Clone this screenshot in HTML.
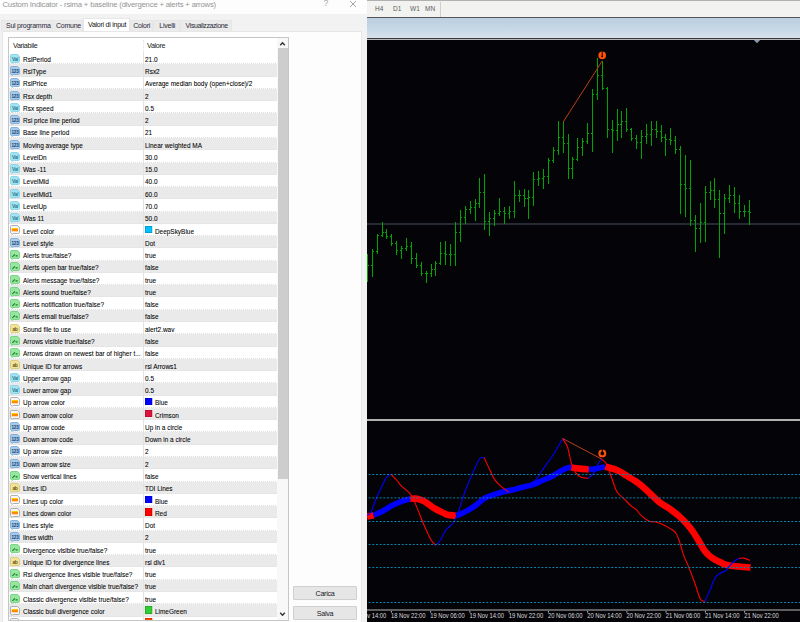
<!DOCTYPE html>
<html><head><meta charset="utf-8">
<style>
*{margin:0;padding:0;box-sizing:border-box}
html,body{width:800px;height:622px;overflow:hidden;background:#f0f0f0;font-family:"Liberation Sans",sans-serif;}
.abs{position:absolute}
#dlg{position:absolute;left:0;top:0;width:367px;height:622px;background:#f2f2f2;overflow:hidden}
#title{position:absolute;left:0;top:0;width:367px;height:14px;background:#fdfdfd}
#ttext{position:absolute;left:2.5px;top:-0.4px;font-size:7.7px;color:#959595;white-space:nowrap;letter-spacing:-0.18px}
#q{position:absolute;left:323.5px;top:-1.6px;font-size:8.6px;color:#a4a4a4}
#x{position:absolute;left:349px;top:0.2px}
.tab{position:absolute;top:19.5px;height:11.5px;background:#ebebeb;border:1px solid #e6e6e6;border-bottom:none;font-size:7px;color:#2a2a3a;white-space:nowrap;padding-top:1px;letter-spacing:-0.25px}
.tab.sel{top:17.5px;height:13.5px;background:#ffffff;z-index:2;color:#111}
#panel{position:absolute;left:2px;top:31px;width:360px;height:600px;background:#fdfdfd;border:1px solid #e6e6e6}
#tbl{position:absolute;left:8px;top:37px;width:281px;height:584px;background:#fff;overflow:hidden}
#tblb{position:absolute;left:8px;top:37px;width:281px;height:584px;border:1px solid #c6c6c6;z-index:5}
.hd{position:absolute;top:3.6px;font-size:7.2px;color:#222;letter-spacing:-0.35px}
.r{position:absolute;left:1px;width:269px;height:12.27px;background:#fff;border-bottom:1px dotted #e0e0e0;font-size:8px;color:#000;white-space:nowrap;-webkit-text-stroke:0.08px #000}
.r.g{background:#eaeaea}
.r .n{position:absolute;left:14px;top:2.7px;transform:scaleX(0.806);transform-origin:0 0}
.r .v{position:absolute;left:136px;top:2.7px;transform:scaleX(0.806);transform-origin:0 0}
.r .sw{position:absolute;left:0px;top:-0.8px;width:8.8px;height:7.6px;box-shadow:inset 0 0 0 0.8px rgba(0,0,0,0.22)}
.r .vt2{position:absolute;left:12.3px;top:0;white-space:nowrap}
.ic{position:absolute;left:0.8px;top:1.6px}
.icd{background:#a0e2f2;color:#2a7a90;border:1px solid #78cce2}
.ici{background:#a4c9ea;color:#173c6c;border:1px solid #6ea2d2}
.ics{background:#eedf8a;color:#6a5a10;border:1px solid #cdb84c}
.icb{background:#7ee08a;border:1px solid #3fb04c}
.icb svg{position:absolute;left:-1px;top:-1px}
.icc{background:#f4f4f4;border:1px solid #9a9a9a}
.icc b{position:absolute;left:1px;top:2.5px;width:6px;height:3px;background:#ff8c00;border-top:1px solid #ffd000}
#colsep{position:absolute;left:143px;top:52px;width:1px;height:568px;background:#e2e2e2;z-index:3}
#colsep2{position:absolute;left:143px;top:40px;width:0;height:12px;border-left:1px dotted #e4e4e4;z-index:3}
#sb{position:absolute;left:277px;top:38px;width:11px;height:582px;background:#f8f8f8;z-index:4}
#thumb{position:absolute;left:278px;top:48px;width:9.6px;height:430.5px;background:#cdcdcd;z-index:4}
.btn{position:absolute;left:293px;width:64px;height:13.5px;background:#e6e6e6;border:1px solid #cfcfcf;border-radius:1px;font-size:7.2px;color:#1a1a2a;text-align:center;line-height:13.4px;letter-spacing:-0.3px}
#rstrip{position:absolute;left:362px;top:31px;width:5px;height:591px;background:#f2f2f2}
#chart{position:absolute;left:367px;top:0;width:433px;height:622px;background:#040307;overflow:hidden}
#tb{position:absolute;left:0;top:0;width:433px;height:17px;background:#f2f2f0;border-top:1px solid #b0b0b0}
#tb span{position:absolute;top:4.3px;font-size:6.5px;color:#5a5a5a}
#tbsep{position:absolute;left:73px;top:1px;width:1px;height:15px;background:#cfcfcf}
#dk1{position:absolute;left:0;top:16.6px;width:433px;height:1.2px;background:#555}
#blue{position:absolute;left:0;top:17.6px;width:433px;height:20px;background:linear-gradient(#bccfe0,#c6d6e4 50%,#d6e2ec)}
#dk2{position:absolute;left:0;top:37.7px;width:433px;height:1.2px;background:#3a3a3a}
#lt2{position:absolute;left:0;top:38.9px;width:433px;height:1.1px;background:#b8b8b8}
svg#cs{position:absolute;left:0;top:0}
</style></head><body>
<div id="dlg">
  <div id="title"><span id="ttext">Custom Indicator - rsima + baseline (divergence + alerts + arrows)</span>
   <span id="q">?</span>
   <svg id="x" width="8" height="8" viewBox="0 0 8 8"><path d="M1 1L7 7M7 1L1 7" stroke="#9a9a9a" stroke-width="0.9"/></svg>
  </div>
  <div id="panel"></div>
  <div class="tab" style="left:1px;width:52px;padding-left:4px">Sul programma</div>
  <div class="tab" style="left:52px;width:31px;padding-left:3px">Comune</div>
  <div class="tab sel" style="left:83px;width:47px;padding-left:4px;padding-top:2px">Valori di input</div>
  <div class="tab" style="left:130px;width:23px;padding-left:2.3px">Colori</div>
  <div class="tab" style="left:153px;width:27px;padding-left:5.3px">Livelli</div>
  <div class="tab" style="left:180px;width:52px;padding-left:4.6px;letter-spacing:-0.4px">Visualizzazione</div>
  <div id="tbl">
    <span class="hd" style="left:5px">Variabile</span>
    <span class="hd" style="left:139px">Valore</span>
    <div class="r" style="top:15.10px"><svg class="ic" width="10" height="10" viewBox="0 0 10 10"><path d="M0.5 1.6Q0.5 0.5 1.6 0.5H7.6L9.5 2.4V7.4Q9.5 8.5 8.4 8.5H3.2L2.2 9.5L1.8 8.5H1.6Q0.5 8.5 0.5 7.4Z" fill="#a2e3f3" stroke="#7fcfe4" stroke-width="0.8"/><text x="5" y="6.6" font-size="5" font-weight="bold" text-anchor="middle" fill="#2c7d92" font-family="Liberation Sans" letter-spacing="-0.4">Va/</text></svg><span class="n">RsiPeriod</span><span class="v">21.0</span></div>
<div class="r g" style="top:27.37px"><svg class="ic" width="10" height="10" viewBox="0 0 10 10"><path d="M0.5 1.6Q0.5 0.5 1.6 0.5H7.6L9.5 2.4V7.4Q9.5 8.5 8.4 8.5H3.2L2.2 9.5L1.8 8.5H1.6Q0.5 8.5 0.5 7.4Z" fill="#a6cbec" stroke="#72a6d6" stroke-width="0.8"/><text x="5" y="6.7" font-size="4.6" font-weight="bold" text-anchor="middle" fill="#17406e" font-family="Liberation Sans" letter-spacing="-0.2">123</text></svg><span class="n">RsiType</span><span class="v">Rsx2</span></div>
<div class="r" style="top:39.64px"><svg class="ic" width="10" height="10" viewBox="0 0 10 10"><path d="M0.5 1.6Q0.5 0.5 1.6 0.5H7.6L9.5 2.4V7.4Q9.5 8.5 8.4 8.5H3.2L2.2 9.5L1.8 8.5H1.6Q0.5 8.5 0.5 7.4Z" fill="#a6cbec" stroke="#72a6d6" stroke-width="0.8"/><text x="5" y="6.7" font-size="4.6" font-weight="bold" text-anchor="middle" fill="#17406e" font-family="Liberation Sans" letter-spacing="-0.2">123</text></svg><span class="n">RsiPrice</span><span class="v">Average median body (open+close)/2</span></div>
<div class="r g" style="top:51.91px"><svg class="ic" width="10" height="10" viewBox="0 0 10 10"><path d="M0.5 1.6Q0.5 0.5 1.6 0.5H7.6L9.5 2.4V7.4Q9.5 8.5 8.4 8.5H3.2L2.2 9.5L1.8 8.5H1.6Q0.5 8.5 0.5 7.4Z" fill="#a6cbec" stroke="#72a6d6" stroke-width="0.8"/><text x="5" y="6.7" font-size="4.6" font-weight="bold" text-anchor="middle" fill="#17406e" font-family="Liberation Sans" letter-spacing="-0.2">123</text></svg><span class="n">Rsx depth</span><span class="v">2</span></div>
<div class="r" style="top:64.18px"><svg class="ic" width="10" height="10" viewBox="0 0 10 10"><path d="M0.5 1.6Q0.5 0.5 1.6 0.5H7.6L9.5 2.4V7.4Q9.5 8.5 8.4 8.5H3.2L2.2 9.5L1.8 8.5H1.6Q0.5 8.5 0.5 7.4Z" fill="#a2e3f3" stroke="#7fcfe4" stroke-width="0.8"/><text x="5" y="6.6" font-size="5" font-weight="bold" text-anchor="middle" fill="#2c7d92" font-family="Liberation Sans" letter-spacing="-0.4">Va/</text></svg><span class="n">Rsx speed</span><span class="v">0.5</span></div>
<div class="r g" style="top:76.45px"><svg class="ic" width="10" height="10" viewBox="0 0 10 10"><path d="M0.5 1.6Q0.5 0.5 1.6 0.5H7.6L9.5 2.4V7.4Q9.5 8.5 8.4 8.5H3.2L2.2 9.5L1.8 8.5H1.6Q0.5 8.5 0.5 7.4Z" fill="#a6cbec" stroke="#72a6d6" stroke-width="0.8"/><text x="5" y="6.7" font-size="4.6" font-weight="bold" text-anchor="middle" fill="#17406e" font-family="Liberation Sans" letter-spacing="-0.2">123</text></svg><span class="n">Rsi price line period</span><span class="v">2</span></div>
<div class="r" style="top:88.72px"><svg class="ic" width="10" height="10" viewBox="0 0 10 10"><path d="M0.5 1.6Q0.5 0.5 1.6 0.5H7.6L9.5 2.4V7.4Q9.5 8.5 8.4 8.5H3.2L2.2 9.5L1.8 8.5H1.6Q0.5 8.5 0.5 7.4Z" fill="#a6cbec" stroke="#72a6d6" stroke-width="0.8"/><text x="5" y="6.7" font-size="4.6" font-weight="bold" text-anchor="middle" fill="#17406e" font-family="Liberation Sans" letter-spacing="-0.2">123</text></svg><span class="n">Base line period</span><span class="v">21</span></div>
<div class="r g" style="top:100.99px"><svg class="ic" width="10" height="10" viewBox="0 0 10 10"><path d="M0.5 1.6Q0.5 0.5 1.6 0.5H7.6L9.5 2.4V7.4Q9.5 8.5 8.4 8.5H3.2L2.2 9.5L1.8 8.5H1.6Q0.5 8.5 0.5 7.4Z" fill="#a6cbec" stroke="#72a6d6" stroke-width="0.8"/><text x="5" y="6.7" font-size="4.6" font-weight="bold" text-anchor="middle" fill="#17406e" font-family="Liberation Sans" letter-spacing="-0.2">123</text></svg><span class="n">Moving average type</span><span class="v">Linear weighted MA</span></div>
<div class="r" style="top:113.26px"><svg class="ic" width="10" height="10" viewBox="0 0 10 10"><path d="M0.5 1.6Q0.5 0.5 1.6 0.5H7.6L9.5 2.4V7.4Q9.5 8.5 8.4 8.5H3.2L2.2 9.5L1.8 8.5H1.6Q0.5 8.5 0.5 7.4Z" fill="#a2e3f3" stroke="#7fcfe4" stroke-width="0.8"/><text x="5" y="6.6" font-size="5" font-weight="bold" text-anchor="middle" fill="#2c7d92" font-family="Liberation Sans" letter-spacing="-0.4">Va/</text></svg><span class="n">LevelDn</span><span class="v">30.0</span></div>
<div class="r g" style="top:125.53px"><svg class="ic" width="10" height="10" viewBox="0 0 10 10"><path d="M0.5 1.6Q0.5 0.5 1.6 0.5H7.6L9.5 2.4V7.4Q9.5 8.5 8.4 8.5H3.2L2.2 9.5L1.8 8.5H1.6Q0.5 8.5 0.5 7.4Z" fill="#a2e3f3" stroke="#7fcfe4" stroke-width="0.8"/><text x="5" y="6.6" font-size="5" font-weight="bold" text-anchor="middle" fill="#2c7d92" font-family="Liberation Sans" letter-spacing="-0.4">Va/</text></svg><span class="n">Was -11</span><span class="v">15.0</span></div>
<div class="r" style="top:137.80px"><svg class="ic" width="10" height="10" viewBox="0 0 10 10"><path d="M0.5 1.6Q0.5 0.5 1.6 0.5H7.6L9.5 2.4V7.4Q9.5 8.5 8.4 8.5H3.2L2.2 9.5L1.8 8.5H1.6Q0.5 8.5 0.5 7.4Z" fill="#a2e3f3" stroke="#7fcfe4" stroke-width="0.8"/><text x="5" y="6.6" font-size="5" font-weight="bold" text-anchor="middle" fill="#2c7d92" font-family="Liberation Sans" letter-spacing="-0.4">Va/</text></svg><span class="n">LevelMid</span><span class="v">40.0</span></div>
<div class="r g" style="top:150.07px"><svg class="ic" width="10" height="10" viewBox="0 0 10 10"><path d="M0.5 1.6Q0.5 0.5 1.6 0.5H7.6L9.5 2.4V7.4Q9.5 8.5 8.4 8.5H3.2L2.2 9.5L1.8 8.5H1.6Q0.5 8.5 0.5 7.4Z" fill="#a2e3f3" stroke="#7fcfe4" stroke-width="0.8"/><text x="5" y="6.6" font-size="5" font-weight="bold" text-anchor="middle" fill="#2c7d92" font-family="Liberation Sans" letter-spacing="-0.4">Va/</text></svg><span class="n">LevelMid1</span><span class="v">60.0</span></div>
<div class="r" style="top:162.34px"><svg class="ic" width="10" height="10" viewBox="0 0 10 10"><path d="M0.5 1.6Q0.5 0.5 1.6 0.5H7.6L9.5 2.4V7.4Q9.5 8.5 8.4 8.5H3.2L2.2 9.5L1.8 8.5H1.6Q0.5 8.5 0.5 7.4Z" fill="#a2e3f3" stroke="#7fcfe4" stroke-width="0.8"/><text x="5" y="6.6" font-size="5" font-weight="bold" text-anchor="middle" fill="#2c7d92" font-family="Liberation Sans" letter-spacing="-0.4">Va/</text></svg><span class="n">LevelUp</span><span class="v">70.0</span></div>
<div class="r g" style="top:174.61px"><svg class="ic" width="10" height="10" viewBox="0 0 10 10"><path d="M0.5 1.6Q0.5 0.5 1.6 0.5H7.6L9.5 2.4V7.4Q9.5 8.5 8.4 8.5H3.2L2.2 9.5L1.8 8.5H1.6Q0.5 8.5 0.5 7.4Z" fill="#a2e3f3" stroke="#7fcfe4" stroke-width="0.8"/><text x="5" y="6.6" font-size="5" font-weight="bold" text-anchor="middle" fill="#2c7d92" font-family="Liberation Sans" letter-spacing="-0.4">Va/</text></svg><span class="n">Was 11</span><span class="v">50.0</span></div>
<div class="r" style="top:186.88px"><svg class="ic" width="10" height="10" viewBox="0 0 10 10"><path d="M0.5 1.6Q0.5 0.5 1.6 0.5H7.6L9.5 2.4V7.4Q9.5 8.5 8.4 8.5H3.2L2.2 9.5L1.8 8.5H1.6Q0.5 8.5 0.5 7.4Z" fill="#f6f6f6" stroke="#9c9c9c" stroke-width="0.8"/><rect x="1.8" y="3.3" width="6.2" height="3" fill="#ff8a00"/><rect x="1.8" y="3.1" width="6.2" height="0.9" fill="#ffd200"/></svg><span class="n">Level color</span><span class="v"><b class="sw" style="background:#00bfff"></b><span class="vt2">DeepSkyBlue</span></span></div>
<div class="r g" style="top:199.15px"><svg class="ic" width="10" height="10" viewBox="0 0 10 10"><path d="M0.5 1.6Q0.5 0.5 1.6 0.5H7.6L9.5 2.4V7.4Q9.5 8.5 8.4 8.5H3.2L2.2 9.5L1.8 8.5H1.6Q0.5 8.5 0.5 7.4Z" fill="#a6cbec" stroke="#72a6d6" stroke-width="0.8"/><text x="5" y="6.7" font-size="4.6" font-weight="bold" text-anchor="middle" fill="#17406e" font-family="Liberation Sans" letter-spacing="-0.2">123</text></svg><span class="n">Level style</span><span class="v">Dot</span></div>
<div class="r" style="top:211.42px"><svg class="ic" width="10" height="10" viewBox="0 0 10 10"><path d="M0.5 1.6Q0.5 0.5 1.6 0.5H7.6L9.5 2.4V7.4Q9.5 8.5 8.4 8.5H3.2L2.2 9.5L1.8 8.5H1.6Q0.5 8.5 0.5 7.4Z" fill="#96e6a0" stroke="#68cc76" stroke-width="0.8"/><path d="M2.4 6.8L5 4.4M5.6 5.9H7.6" stroke="#157a25" stroke-width="1.1" fill="none"/></svg><span class="n">Alerts true/false?</span><span class="v">true</span></div>
<div class="r g" style="top:223.69px"><svg class="ic" width="10" height="10" viewBox="0 0 10 10"><path d="M0.5 1.6Q0.5 0.5 1.6 0.5H7.6L9.5 2.4V7.4Q9.5 8.5 8.4 8.5H3.2L2.2 9.5L1.8 8.5H1.6Q0.5 8.5 0.5 7.4Z" fill="#96e6a0" stroke="#68cc76" stroke-width="0.8"/><path d="M2.4 6.8L5 4.4M5.6 5.9H7.6" stroke="#157a25" stroke-width="1.1" fill="none"/></svg><span class="n">Alerts open bar true/false?</span><span class="v">false</span></div>
<div class="r" style="top:235.96px"><svg class="ic" width="10" height="10" viewBox="0 0 10 10"><path d="M0.5 1.6Q0.5 0.5 1.6 0.5H7.6L9.5 2.4V7.4Q9.5 8.5 8.4 8.5H3.2L2.2 9.5L1.8 8.5H1.6Q0.5 8.5 0.5 7.4Z" fill="#96e6a0" stroke="#68cc76" stroke-width="0.8"/><path d="M2.4 6.8L5 4.4M5.6 5.9H7.6" stroke="#157a25" stroke-width="1.1" fill="none"/></svg><span class="n">Alerts message true/false?</span><span class="v">true</span></div>
<div class="r g" style="top:248.23px"><svg class="ic" width="10" height="10" viewBox="0 0 10 10"><path d="M0.5 1.6Q0.5 0.5 1.6 0.5H7.6L9.5 2.4V7.4Q9.5 8.5 8.4 8.5H3.2L2.2 9.5L1.8 8.5H1.6Q0.5 8.5 0.5 7.4Z" fill="#96e6a0" stroke="#68cc76" stroke-width="0.8"/><path d="M2.4 6.8L5 4.4M5.6 5.9H7.6" stroke="#157a25" stroke-width="1.1" fill="none"/></svg><span class="n">Alerts sound true/false?</span><span class="v">true</span></div>
<div class="r" style="top:260.50px"><svg class="ic" width="10" height="10" viewBox="0 0 10 10"><path d="M0.5 1.6Q0.5 0.5 1.6 0.5H7.6L9.5 2.4V7.4Q9.5 8.5 8.4 8.5H3.2L2.2 9.5L1.8 8.5H1.6Q0.5 8.5 0.5 7.4Z" fill="#96e6a0" stroke="#68cc76" stroke-width="0.8"/><path d="M2.4 6.8L5 4.4M5.6 5.9H7.6" stroke="#157a25" stroke-width="1.1" fill="none"/></svg><span class="n">Alerts notification true/false?</span><span class="v">false</span></div>
<div class="r g" style="top:272.77px"><svg class="ic" width="10" height="10" viewBox="0 0 10 10"><path d="M0.5 1.6Q0.5 0.5 1.6 0.5H7.6L9.5 2.4V7.4Q9.5 8.5 8.4 8.5H3.2L2.2 9.5L1.8 8.5H1.6Q0.5 8.5 0.5 7.4Z" fill="#96e6a0" stroke="#68cc76" stroke-width="0.8"/><path d="M2.4 6.8L5 4.4M5.6 5.9H7.6" stroke="#157a25" stroke-width="1.1" fill="none"/></svg><span class="n">Alerts email true/false?</span><span class="v">false</span></div>
<div class="r" style="top:285.04px"><svg class="ic" width="10" height="10" viewBox="0 0 10 10"><path d="M0.5 1.6Q0.5 0.5 1.6 0.5H7.6L9.5 2.4V7.4Q9.5 8.5 8.4 8.5H3.2L2.2 9.5L1.8 8.5H1.6Q0.5 8.5 0.5 7.4Z" fill="#f1e39a" stroke="#d8c46a" stroke-width="0.8"/><text x="5" y="6.7" font-size="5" font-weight="bold" text-anchor="middle" fill="#6a5a18" font-family="Liberation Sans" letter-spacing="-0.3">ab</text></svg><span class="n">Sound file to use</span><span class="v">alert2.wav</span></div>
<div class="r g" style="top:297.31px"><svg class="ic" width="10" height="10" viewBox="0 0 10 10"><path d="M0.5 1.6Q0.5 0.5 1.6 0.5H7.6L9.5 2.4V7.4Q9.5 8.5 8.4 8.5H3.2L2.2 9.5L1.8 8.5H1.6Q0.5 8.5 0.5 7.4Z" fill="#96e6a0" stroke="#68cc76" stroke-width="0.8"/><path d="M2.4 6.8L5 4.4M5.6 5.9H7.6" stroke="#157a25" stroke-width="1.1" fill="none"/></svg><span class="n">Arrows visible true/false?</span><span class="v">false</span></div>
<div class="r" style="top:309.58px"><svg class="ic" width="10" height="10" viewBox="0 0 10 10"><path d="M0.5 1.6Q0.5 0.5 1.6 0.5H7.6L9.5 2.4V7.4Q9.5 8.5 8.4 8.5H3.2L2.2 9.5L1.8 8.5H1.6Q0.5 8.5 0.5 7.4Z" fill="#96e6a0" stroke="#68cc76" stroke-width="0.8"/><path d="M2.4 6.8L5 4.4M5.6 5.9H7.6" stroke="#157a25" stroke-width="1.1" fill="none"/></svg><span class="n">Arrows drawn on newest bar of higher t...</span><span class="v">false</span></div>
<div class="r g" style="top:321.85px"><svg class="ic" width="10" height="10" viewBox="0 0 10 10"><path d="M0.5 1.6Q0.5 0.5 1.6 0.5H7.6L9.5 2.4V7.4Q9.5 8.5 8.4 8.5H3.2L2.2 9.5L1.8 8.5H1.6Q0.5 8.5 0.5 7.4Z" fill="#f1e39a" stroke="#d8c46a" stroke-width="0.8"/><text x="5" y="6.7" font-size="5" font-weight="bold" text-anchor="middle" fill="#6a5a18" font-family="Liberation Sans" letter-spacing="-0.3">ab</text></svg><span class="n">Unique ID for arrows</span><span class="v">rsi Arrows1</span></div>
<div class="r" style="top:334.12px"><svg class="ic" width="10" height="10" viewBox="0 0 10 10"><path d="M0.5 1.6Q0.5 0.5 1.6 0.5H7.6L9.5 2.4V7.4Q9.5 8.5 8.4 8.5H3.2L2.2 9.5L1.8 8.5H1.6Q0.5 8.5 0.5 7.4Z" fill="#a2e3f3" stroke="#7fcfe4" stroke-width="0.8"/><text x="5" y="6.6" font-size="5" font-weight="bold" text-anchor="middle" fill="#2c7d92" font-family="Liberation Sans" letter-spacing="-0.4">Va/</text></svg><span class="n">Upper arrow gap</span><span class="v">0.5</span></div>
<div class="r g" style="top:346.39px"><svg class="ic" width="10" height="10" viewBox="0 0 10 10"><path d="M0.5 1.6Q0.5 0.5 1.6 0.5H7.6L9.5 2.4V7.4Q9.5 8.5 8.4 8.5H3.2L2.2 9.5L1.8 8.5H1.6Q0.5 8.5 0.5 7.4Z" fill="#a2e3f3" stroke="#7fcfe4" stroke-width="0.8"/><text x="5" y="6.6" font-size="5" font-weight="bold" text-anchor="middle" fill="#2c7d92" font-family="Liberation Sans" letter-spacing="-0.4">Va/</text></svg><span class="n">Lower arrow gap</span><span class="v">0.5</span></div>
<div class="r" style="top:358.66px"><svg class="ic" width="10" height="10" viewBox="0 0 10 10"><path d="M0.5 1.6Q0.5 0.5 1.6 0.5H7.6L9.5 2.4V7.4Q9.5 8.5 8.4 8.5H3.2L2.2 9.5L1.8 8.5H1.6Q0.5 8.5 0.5 7.4Z" fill="#f6f6f6" stroke="#9c9c9c" stroke-width="0.8"/><rect x="1.8" y="3.3" width="6.2" height="3" fill="#ff8a00"/><rect x="1.8" y="3.1" width="6.2" height="0.9" fill="#ffd200"/></svg><span class="n">Up arrow color</span><span class="v"><b class="sw" style="background:#0000ff"></b><span class="vt2">Blue</span></span></div>
<div class="r g" style="top:370.93px"><svg class="ic" width="10" height="10" viewBox="0 0 10 10"><path d="M0.5 1.6Q0.5 0.5 1.6 0.5H7.6L9.5 2.4V7.4Q9.5 8.5 8.4 8.5H3.2L2.2 9.5L1.8 8.5H1.6Q0.5 8.5 0.5 7.4Z" fill="#f6f6f6" stroke="#9c9c9c" stroke-width="0.8"/><rect x="1.8" y="3.3" width="6.2" height="3" fill="#ff8a00"/><rect x="1.8" y="3.1" width="6.2" height="0.9" fill="#ffd200"/></svg><span class="n">Down arrow color</span><span class="v"><b class="sw" style="background:#dc143c"></b><span class="vt2">Crimson</span></span></div>
<div class="r" style="top:383.20px"><svg class="ic" width="10" height="10" viewBox="0 0 10 10"><path d="M0.5 1.6Q0.5 0.5 1.6 0.5H7.6L9.5 2.4V7.4Q9.5 8.5 8.4 8.5H3.2L2.2 9.5L1.8 8.5H1.6Q0.5 8.5 0.5 7.4Z" fill="#a6cbec" stroke="#72a6d6" stroke-width="0.8"/><text x="5" y="6.7" font-size="4.6" font-weight="bold" text-anchor="middle" fill="#17406e" font-family="Liberation Sans" letter-spacing="-0.2">123</text></svg><span class="n">Up arrow code</span><span class="v">Up in a circle</span></div>
<div class="r g" style="top:395.47px"><svg class="ic" width="10" height="10" viewBox="0 0 10 10"><path d="M0.5 1.6Q0.5 0.5 1.6 0.5H7.6L9.5 2.4V7.4Q9.5 8.5 8.4 8.5H3.2L2.2 9.5L1.8 8.5H1.6Q0.5 8.5 0.5 7.4Z" fill="#a6cbec" stroke="#72a6d6" stroke-width="0.8"/><text x="5" y="6.7" font-size="4.6" font-weight="bold" text-anchor="middle" fill="#17406e" font-family="Liberation Sans" letter-spacing="-0.2">123</text></svg><span class="n">Down arrow code</span><span class="v">Down in a circle</span></div>
<div class="r" style="top:407.74px"><svg class="ic" width="10" height="10" viewBox="0 0 10 10"><path d="M0.5 1.6Q0.5 0.5 1.6 0.5H7.6L9.5 2.4V7.4Q9.5 8.5 8.4 8.5H3.2L2.2 9.5L1.8 8.5H1.6Q0.5 8.5 0.5 7.4Z" fill="#a6cbec" stroke="#72a6d6" stroke-width="0.8"/><text x="5" y="6.7" font-size="4.6" font-weight="bold" text-anchor="middle" fill="#17406e" font-family="Liberation Sans" letter-spacing="-0.2">123</text></svg><span class="n">Up arrow size</span><span class="v">2</span></div>
<div class="r g" style="top:420.01px"><svg class="ic" width="10" height="10" viewBox="0 0 10 10"><path d="M0.5 1.6Q0.5 0.5 1.6 0.5H7.6L9.5 2.4V7.4Q9.5 8.5 8.4 8.5H3.2L2.2 9.5L1.8 8.5H1.6Q0.5 8.5 0.5 7.4Z" fill="#a6cbec" stroke="#72a6d6" stroke-width="0.8"/><text x="5" y="6.7" font-size="4.6" font-weight="bold" text-anchor="middle" fill="#17406e" font-family="Liberation Sans" letter-spacing="-0.2">123</text></svg><span class="n">Down arrow size</span><span class="v">2</span></div>
<div class="r" style="top:432.28px"><svg class="ic" width="10" height="10" viewBox="0 0 10 10"><path d="M0.5 1.6Q0.5 0.5 1.6 0.5H7.6L9.5 2.4V7.4Q9.5 8.5 8.4 8.5H3.2L2.2 9.5L1.8 8.5H1.6Q0.5 8.5 0.5 7.4Z" fill="#96e6a0" stroke="#68cc76" stroke-width="0.8"/><path d="M2.4 6.8L5 4.4M5.6 5.9H7.6" stroke="#157a25" stroke-width="1.1" fill="none"/></svg><span class="n">Show vertical lines</span><span class="v">false</span></div>
<div class="r g" style="top:444.55px"><svg class="ic" width="10" height="10" viewBox="0 0 10 10"><path d="M0.5 1.6Q0.5 0.5 1.6 0.5H7.6L9.5 2.4V7.4Q9.5 8.5 8.4 8.5H3.2L2.2 9.5L1.8 8.5H1.6Q0.5 8.5 0.5 7.4Z" fill="#f1e39a" stroke="#d8c46a" stroke-width="0.8"/><text x="5" y="6.7" font-size="5" font-weight="bold" text-anchor="middle" fill="#6a5a18" font-family="Liberation Sans" letter-spacing="-0.3">ab</text></svg><span class="n">Lines ID</span><span class="v">TDI Lines</span></div>
<div class="r" style="top:456.82px"><svg class="ic" width="10" height="10" viewBox="0 0 10 10"><path d="M0.5 1.6Q0.5 0.5 1.6 0.5H7.6L9.5 2.4V7.4Q9.5 8.5 8.4 8.5H3.2L2.2 9.5L1.8 8.5H1.6Q0.5 8.5 0.5 7.4Z" fill="#f6f6f6" stroke="#9c9c9c" stroke-width="0.8"/><rect x="1.8" y="3.3" width="6.2" height="3" fill="#ff8a00"/><rect x="1.8" y="3.1" width="6.2" height="0.9" fill="#ffd200"/></svg><span class="n">Lines up color</span><span class="v"><b class="sw" style="background:#0000ff"></b><span class="vt2">Blue</span></span></div>
<div class="r g" style="top:469.09px"><svg class="ic" width="10" height="10" viewBox="0 0 10 10"><path d="M0.5 1.6Q0.5 0.5 1.6 0.5H7.6L9.5 2.4V7.4Q9.5 8.5 8.4 8.5H3.2L2.2 9.5L1.8 8.5H1.6Q0.5 8.5 0.5 7.4Z" fill="#f6f6f6" stroke="#9c9c9c" stroke-width="0.8"/><rect x="1.8" y="3.3" width="6.2" height="3" fill="#ff8a00"/><rect x="1.8" y="3.1" width="6.2" height="0.9" fill="#ffd200"/></svg><span class="n">Lines down color</span><span class="v"><b class="sw" style="background:#ff0000"></b><span class="vt2">Red</span></span></div>
<div class="r" style="top:481.36px"><svg class="ic" width="10" height="10" viewBox="0 0 10 10"><path d="M0.5 1.6Q0.5 0.5 1.6 0.5H7.6L9.5 2.4V7.4Q9.5 8.5 8.4 8.5H3.2L2.2 9.5L1.8 8.5H1.6Q0.5 8.5 0.5 7.4Z" fill="#a6cbec" stroke="#72a6d6" stroke-width="0.8"/><text x="5" y="6.7" font-size="4.6" font-weight="bold" text-anchor="middle" fill="#17406e" font-family="Liberation Sans" letter-spacing="-0.2">123</text></svg><span class="n">Lines style</span><span class="v">Dot</span></div>
<div class="r g" style="top:493.63px"><svg class="ic" width="10" height="10" viewBox="0 0 10 10"><path d="M0.5 1.6Q0.5 0.5 1.6 0.5H7.6L9.5 2.4V7.4Q9.5 8.5 8.4 8.5H3.2L2.2 9.5L1.8 8.5H1.6Q0.5 8.5 0.5 7.4Z" fill="#a6cbec" stroke="#72a6d6" stroke-width="0.8"/><text x="5" y="6.7" font-size="4.6" font-weight="bold" text-anchor="middle" fill="#17406e" font-family="Liberation Sans" letter-spacing="-0.2">123</text></svg><span class="n">lines width</span><span class="v">2</span></div>
<div class="r" style="top:505.90px"><svg class="ic" width="10" height="10" viewBox="0 0 10 10"><path d="M0.5 1.6Q0.5 0.5 1.6 0.5H7.6L9.5 2.4V7.4Q9.5 8.5 8.4 8.5H3.2L2.2 9.5L1.8 8.5H1.6Q0.5 8.5 0.5 7.4Z" fill="#96e6a0" stroke="#68cc76" stroke-width="0.8"/><path d="M2.4 6.8L5 4.4M5.6 5.9H7.6" stroke="#157a25" stroke-width="1.1" fill="none"/></svg><span class="n">Divergence visible true/false?</span><span class="v">true</span></div>
<div class="r g" style="top:518.17px"><svg class="ic" width="10" height="10" viewBox="0 0 10 10"><path d="M0.5 1.6Q0.5 0.5 1.6 0.5H7.6L9.5 2.4V7.4Q9.5 8.5 8.4 8.5H3.2L2.2 9.5L1.8 8.5H1.6Q0.5 8.5 0.5 7.4Z" fill="#f1e39a" stroke="#d8c46a" stroke-width="0.8"/><text x="5" y="6.7" font-size="5" font-weight="bold" text-anchor="middle" fill="#6a5a18" font-family="Liberation Sans" letter-spacing="-0.3">ab</text></svg><span class="n">Unique ID for divergence lines</span><span class="v">rsi div1</span></div>
<div class="r" style="top:530.44px"><svg class="ic" width="10" height="10" viewBox="0 0 10 10"><path d="M0.5 1.6Q0.5 0.5 1.6 0.5H7.6L9.5 2.4V7.4Q9.5 8.5 8.4 8.5H3.2L2.2 9.5L1.8 8.5H1.6Q0.5 8.5 0.5 7.4Z" fill="#96e6a0" stroke="#68cc76" stroke-width="0.8"/><path d="M2.4 6.8L5 4.4M5.6 5.9H7.6" stroke="#157a25" stroke-width="1.1" fill="none"/></svg><span class="n">Rsi divergence lines visible true/false?</span><span class="v">true</span></div>
<div class="r g" style="top:542.71px"><svg class="ic" width="10" height="10" viewBox="0 0 10 10"><path d="M0.5 1.6Q0.5 0.5 1.6 0.5H7.6L9.5 2.4V7.4Q9.5 8.5 8.4 8.5H3.2L2.2 9.5L1.8 8.5H1.6Q0.5 8.5 0.5 7.4Z" fill="#96e6a0" stroke="#68cc76" stroke-width="0.8"/><path d="M2.4 6.8L5 4.4M5.6 5.9H7.6" stroke="#157a25" stroke-width="1.1" fill="none"/></svg><span class="n">Main chart divergence visible true/false?</span><span class="v">true</span></div>
<div class="r" style="top:554.98px"><svg class="ic" width="10" height="10" viewBox="0 0 10 10"><path d="M0.5 1.6Q0.5 0.5 1.6 0.5H7.6L9.5 2.4V7.4Q9.5 8.5 8.4 8.5H3.2L2.2 9.5L1.8 8.5H1.6Q0.5 8.5 0.5 7.4Z" fill="#96e6a0" stroke="#68cc76" stroke-width="0.8"/><path d="M2.4 6.8L5 4.4M5.6 5.9H7.6" stroke="#157a25" stroke-width="1.1" fill="none"/></svg><span class="n">Classic divergence visible true/false?</span><span class="v">true</span></div>
<div class="r g" style="top:567.25px"><svg class="ic" width="10" height="10" viewBox="0 0 10 10"><path d="M0.5 1.6Q0.5 0.5 1.6 0.5H7.6L9.5 2.4V7.4Q9.5 8.5 8.4 8.5H3.2L2.2 9.5L1.8 8.5H1.6Q0.5 8.5 0.5 7.4Z" fill="#f6f6f6" stroke="#9c9c9c" stroke-width="0.8"/><rect x="1.8" y="3.3" width="6.2" height="3" fill="#ff8a00"/><rect x="1.8" y="3.1" width="6.2" height="0.9" fill="#ffd200"/></svg><span class="n">Classic bull divergence color</span><span class="v"><b class="sw" style="background:#32cd32"></b><span class="vt2">LimeGreen</span></span></div>
<div class="r" style="top:579.52px"><svg class="ic" width="10" height="10" viewBox="0 0 10 10"><path d="M0.5 1.6Q0.5 0.5 1.6 0.5H7.6L9.5 2.4V7.4Q9.5 8.5 8.4 8.5H3.2L2.2 9.5L1.8 8.5H1.6Q0.5 8.5 0.5 7.4Z" fill="#f6f6f6" stroke="#9c9c9c" stroke-width="0.8"/><rect x="1.8" y="3.3" width="6.2" height="3" fill="#ff8a00"/><rect x="1.8" y="3.1" width="6.2" height="0.9" fill="#ffd200"/></svg><span class="n">Classic bear divergence color</span><span class="v"><b class="sw" style="background:#ff4500"></b><span class="vt2">OrangeRed</span></span></div>
  </div>
  <div id="colsep"></div><div id="colsep2"></div>
  <div id="sb"></div>
  <div id="thumb"></div>
  <svg class="abs" style="left:279px;top:41px;z-index:6" width="7" height="5" viewBox="0 0 7 5"><path d="M1.2 4.2L3.5 1.8L5.8 4.2" stroke="#333" stroke-width="1.4" fill="none"/></svg>
  <svg class="abs" style="left:279px;top:612px;z-index:6" width="7" height="5" viewBox="0 0 7 5"><path d="M1.2 0.8L3.5 3.2L5.8 0.8" stroke="#333" stroke-width="1.4" fill="none"/></svg>
  <div id="tblb"></div>
  <div class="btn" style="top:586.3px">Carica</div>
  <div class="btn" style="top:606px">Salva</div>
  <div id="rstrip"></div>
</div>
<div id="chart">
  <div id="tb"><span style="left:8px">H4</span><span style="left:26px">D1</span><span style="left:43px">W1</span><span style="left:58px">MN</span><div id="tbsep"></div></div>
  <div id="dk1"></div><div id="blue"></div><div id="dk2"></div><div id="lt2"></div>
  <svg id="cs" width="433" height="622" viewBox="0 0 433 622">
<rect x="0" y="223.2" width="433" height="1.6" fill="#30363f"/>
<path d="M0.5 254.0V282.0M-1.0 267.5H0.0M1.0 265.5H2.0M5.5 249.0V277.0M4.0 265.5H5.0M6.0 251.5H7.0M10.5 234.0V254.0M9.0 251.5H10.0M11.0 235.5H12.0M15.5 222.0V237.0M14.0 235.5H15.0M16.0 232.5H17.0M19.5 229.0V239.0M18.0 232.5H19.0M20.0 236.5H21.0M24.5 234.0V246.0M23.0 236.5H24.0M25.0 243.5H26.0M29.5 241.0V255.0M28.0 243.5H29.0M30.0 250.5H31.0M34.5 246.0V259.0M33.0 250.5H34.0M35.0 248.5H36.0M39.5 238.0V251.0M38.0 248.5H39.0M40.0 246.5H41.0M44.5 242.0V264.0M43.0 246.5H44.0M45.0 258.5H46.0M49.5 253.0V268.0M48.0 258.5H49.0M50.0 265.5H51.0M54.5 262.0V276.0M53.0 265.5H54.0M55.0 273.5H56.0M59.5 271.0V283.0M58.0 273.5H59.0M60.0 273.5H61.0M64.5 264.0V277.0M63.0 273.5H64.0M65.0 269.5H66.0M68.5 261.0V276.0M67.0 269.5H68.0M69.0 263.5H70.0M73.5 242.0V265.0M72.0 263.5H73.0M74.0 253.5H75.0M78.5 241.0V265.0M77.0 253.5H78.0M79.0 254.5H80.0M83.5 244.0V266.0M82.0 254.5H83.0M84.0 254.5H85.0M88.5 222.0V266.0M87.0 254.5H88.0M89.0 232.5H90.0M93.5 210.0V242.0M92.0 232.5H93.0M94.0 217.5H95.0M98.5 206.0V224.0M97.0 217.5H98.0M99.0 209.5H100.0M103.5 201.0V214.0M102.0 209.5H103.0M104.0 207.5H105.0M108.5 199.0V221.0M107.0 207.5H108.0M109.0 203.5H110.0M112.5 178.0V208.0M111.0 203.5H112.0M113.0 192.5H114.0M117.5 174.0V230.0M116.0 192.5H117.0M118.0 221.5H119.0M122.5 212.0V236.0M121.0 221.5H122.0M123.0 218.5H124.0M127.5 210.0V226.0M126.0 218.5H127.0M128.0 213.5H129.0M132.5 198.0V216.0M131.0 213.5H132.0M133.0 211.5H134.0M137.5 207.0V224.0M136.0 211.5H137.0M138.0 213.5H139.0M142.5 206.0V219.0M141.0 213.5H142.0M143.0 211.5H144.0M147.5 181.0V218.0M146.0 211.5H147.0M148.0 195.5H149.0M152.5 190.0V202.0M151.0 195.5H152.0M153.0 195.5H154.0M157.5 189.0V207.0M156.0 195.5H157.0M158.0 198.5H159.0M161.5 190.0V219.0M160.0 198.5H161.0M162.0 197.5H163.0M166.5 172.0V206.0M165.0 197.5H166.0M167.0 179.5H168.0M171.5 171.0V186.0M170.0 179.5H171.0M172.0 178.5H173.0M176.5 169.0V189.0M175.0 178.5H176.0M177.0 176.5H178.0M181.5 158.0V184.0M180.0 176.5H181.0M182.0 160.5H183.0M186.5 147.0V163.0M185.0 160.5H186.0M187.0 150.5H188.0M191.5 121.0V155.0M190.0 150.5H191.0M192.0 137.5H193.0M196.5 122.0V153.0M195.0 137.5H196.0M197.0 143.5H198.0M201.5 134.0V179.0M200.0 143.5H201.0M202.0 168.5H203.0M205.5 157.0V179.0M204.0 168.5H205.0M206.0 159.5H207.0M210.5 138.0V161.0M209.0 159.5H210.0M211.0 147.5H212.0M215.5 138.0V156.0M214.0 147.5H215.0M216.0 141.5H217.0M220.5 123.0V144.0M219.0 141.5H220.0M221.0 133.5H222.0M225.5 89.0V152.0M224.0 133.5H225.0M226.0 94.5H227.0M230.5 58.0V100.0M229.0 94.5H230.0M231.0 75.5H232.0M235.5 61.0V90.0M234.0 75.5H235.0M236.0 88.5H237.0M240.5 87.0V138.0M239.0 88.5H240.0M241.0 129.5H242.0M245.5 120.0V153.0M244.0 129.5H245.0M246.0 130.5H247.0M250.5 109.0V141.0M249.0 130.5H250.0M251.0 124.5H252.0M254.5 111.0V138.0M253.0 124.5H254.0M255.0 121.5H256.0M259.5 108.0V132.0M258.0 121.5H259.0M260.0 129.5H261.0M264.5 128.0V141.0M263.0 129.5H264.0M265.0 138.5H266.0M269.5 135.0V149.0M268.0 138.5H269.0M270.0 142.5H271.0M274.5 130.0V159.0M273.0 142.5H274.0M275.0 136.5H276.0M279.5 124.0V144.0M278.0 136.5H279.0M280.0 134.5H281.0M284.5 121.0V146.0M283.0 134.5H284.0M285.0 129.5H286.0M289.5 121.0V138.0M288.0 129.5H289.0M290.0 131.5H291.0M294.5 125.0V142.0M293.0 131.5H294.0M295.0 137.5H296.0M298.5 134.0V156.0M297.0 137.5H298.0M299.0 139.5H300.0M303.5 128.0V145.0M302.0 139.5H303.0M304.0 140.5H305.0M308.5 136.0V154.0M307.0 140.5H308.0M309.0 149.5H310.0M313.5 146.0V214.0M312.0 149.5H313.0M314.0 184.5H315.0M318.5 155.0V217.0M317.0 184.5H318.0M319.0 188.5H320.0M323.5 160.0V226.0M322.0 188.5H323.0M324.0 220.5H325.0M328.5 215.0V252.0M327.0 220.5H328.0M329.0 228.5H330.0M333.5 203.0V243.0M332.0 228.5H333.0M334.0 222.5H335.0M338.5 186.0V242.0M337.0 222.5H338.0M339.0 192.5H340.0M343.5 181.0V200.0M342.0 192.5H343.0M344.0 190.5H345.0M347.5 178.0V208.0M346.0 190.5H347.0M348.0 199.5H349.0M352.5 190.0V258.0M351.0 199.5H352.0M353.0 213.5H354.0M357.5 194.0V234.0M356.0 213.5H357.0M358.0 198.5H359.0M362.5 185.0V203.0M361.0 198.5H362.0M363.0 195.5H364.0M367.5 187.0V213.0M366.0 195.5H367.0M368.0 203.5H369.0M372.5 195.0V219.0M371.0 203.5H372.0M373.0 211.5H374.0M377.5 205.0V217.0M376.0 211.5H377.0M378.0 211.5H379.0M382.5 200.0V225.0M381.0 211.5H382.0M383.0 212.5H384.0" stroke="#00a400" stroke-width="1" fill="none" shape-rendering="crispEdges"/>
<path d="M196.2 122L235.2 61" stroke="#b8401a" stroke-width="1" fill="none"/>
<circle cx="235.20" cy="55.40" r="3.8" fill="#ff5208"/><path d="M235.20 51.20V56.40" stroke="#000" stroke-width="0.9"/><circle cx="235.20" cy="56.40" r="0.9" fill="#000"/>
<path d="M386.8 40L393.2 40L390 43.2Z" fill="#8898b0"/>
<rect x="0" y="419" width="433" height="2" fill="#b0b0b0"/>
<path d="M0.00 516.50L6.70 515.20" stroke="#ff0000" stroke-width="6.6" fill="none" stroke-linejoin="round" stroke-linecap="butt"/>
<path d="M6.70 515.20C8.15 514.55 12.35 512.92 15.40 511.30C18.45 509.68 21.78 507.17 25.00 505.50C28.22 503.83 31.63 502.42 34.70 501.30C37.77 500.18 41.95 499.22 43.40 498.80" stroke="#0000ff" stroke-width="5.6" fill="none" stroke-linejoin="round" stroke-linecap="butt"/>
<path d="M43.40 498.80C44.52 498.80 47.70 498.32 50.10 498.80C52.50 499.28 54.90 500.10 57.80 501.70C60.70 503.30 64.28 506.47 67.50 508.40C70.72 510.33 74.90 512.23 77.10 513.30C79.30 514.37 78.65 514.38 80.70 514.80C82.75 515.22 87.95 515.63 89.40 515.80" stroke="#ff0000" stroke-width="6.6" fill="none" stroke-linejoin="round" stroke-linecap="butt"/>
<path d="M89.40 515.80C90.83 515.15 94.95 513.52 98.00 511.90C101.05 510.28 104.48 508.35 107.70 506.10C110.92 503.85 114.08 500.32 117.30 498.40C120.52 496.48 123.78 495.72 127.00 494.60C130.22 493.48 133.38 492.50 136.60 491.70C139.82 490.90 143.57 490.45 146.30 489.80C149.03 489.15 149.75 488.67 153.00 487.80C156.25 486.93 162.07 485.82 165.80 484.60C169.53 483.38 172.20 481.88 175.40 480.50C178.60 479.12 181.78 477.97 185.00 476.30C188.22 474.63 191.97 471.95 194.70 470.50C197.43 469.05 199.80 468.08 201.40 467.60C203.00 467.12 203.82 467.60 204.30 467.60" stroke="#0000ff" stroke-width="5.6" fill="none" stroke-linejoin="round" stroke-linecap="butt"/>
<path d="M204.30 467.60C205.63 467.77 209.37 468.28 212.30 468.60C215.23 468.92 220.30 469.35 221.90 469.50" stroke="#ff0000" stroke-width="6.6" fill="none" stroke-linejoin="round" stroke-linecap="butt"/>
<path d="M221.90 469.50C223.52 469.28 228.87 468.68 231.60 468.20C234.33 467.72 237.18 466.87 238.30 466.60" stroke="#0000ff" stroke-width="5.6" fill="none" stroke-linejoin="round" stroke-linecap="butt"/>
<path d="M238.30 466.60C240.38 467.25 247.10 468.88 250.80 470.50C254.50 472.12 256.87 474.03 260.50 476.30C264.13 478.57 268.97 481.35 272.60 484.10C276.23 486.85 278.90 489.72 282.30 492.80C285.70 495.88 289.62 499.95 293.00 502.60C296.38 505.25 299.38 506.40 302.60 508.70C305.82 511.00 309.40 513.83 312.30 516.40C315.20 518.97 317.58 521.37 320.00 524.10C322.42 526.83 324.58 529.57 326.80 532.80C329.02 536.03 331.47 540.47 333.30 543.50C335.13 546.53 336.25 548.93 337.80 551.00C339.35 553.07 340.98 554.52 342.60 555.90C344.22 557.28 345.88 558.33 347.50 559.30C349.12 560.27 350.70 560.90 352.30 561.70C353.90 562.50 355.50 563.45 357.10 564.10C358.70 564.75 359.48 565.20 361.90 565.60C364.32 566.00 368.00 566.18 371.60 566.50C375.20 566.82 381.52 567.33 383.50 567.50" stroke="#ff0000" stroke-width="6.6" fill="none" stroke-linejoin="round" stroke-linecap="butt"/>
<path d="M0.00 515.20C0.65 514.72 2.30 515.20 3.90 512.30C5.50 509.40 7.83 501.98 9.60 497.80C11.37 493.62 12.88 490.57 14.50 487.20C16.12 483.83 17.70 479.75 19.30 477.60C20.90 475.45 23.30 474.85 24.10 474.30" stroke="#0000ff" stroke-width="1.1" fill="none" stroke-linejoin="round" stroke-linecap="round"/>
<path d="M24.10 474.30C25.07 475.33 28.13 478.50 29.90 480.50C31.67 482.50 32.93 484.53 34.70 486.30C36.47 488.07 38.73 489.33 40.50 491.10C42.27 492.87 43.53 493.68 45.30 496.90C47.07 500.12 49.17 505.75 51.10 510.40C53.03 515.05 54.82 519.98 56.90 524.80C58.98 529.62 61.68 535.92 63.60 539.30C65.52 542.68 67.60 544.13 68.40 545.10" stroke="#ff0000" stroke-width="1.1" fill="none" stroke-linejoin="round" stroke-linecap="round"/>
<path d="M68.40 545.10C69.17 544.38 71.27 543.28 73.00 540.80C74.73 538.32 76.55 533.25 78.80 530.20C81.05 527.15 84.25 526.03 86.50 522.50C88.75 518.97 90.38 514.13 92.30 509.00C94.22 503.87 95.92 497.32 98.00 491.70C100.08 486.08 102.38 480.77 104.80 475.30C107.22 469.83 110.42 461.78 112.50 458.90C114.58 456.02 116.50 458.15 117.30 458.00" stroke="#0000ff" stroke-width="1.1" fill="none" stroke-linejoin="round" stroke-linecap="round"/>
<path d="M117.30 458.00C118.27 460.08 121.32 466.82 123.10 470.50C124.88 474.18 126.07 477.37 128.00 480.10C129.93 482.83 132.42 484.90 134.70 486.90C136.98 488.90 140.53 491.23 141.70 492.10" stroke="#ff0000" stroke-width="1.1" fill="none" stroke-linejoin="round" stroke-linecap="round"/>
<path d="M141.70 492.10C143.58 491.58 148.83 490.68 153.00 489.00C157.17 487.32 162.80 485.40 166.70 482.00C170.60 478.60 173.18 473.10 176.40 468.60C179.62 464.10 182.78 459.98 186.00 455.00C189.22 450.02 194.08 441.42 195.70 438.70" stroke="#0000ff" stroke-width="1.1" fill="none" stroke-linejoin="round" stroke-linecap="round"/>
<path d="M195.70 438.70C196.52 440.13 199.13 443.13 200.60 447.30C202.07 451.47 203.20 459.52 204.50 463.70C205.80 467.88 206.78 470.15 208.40 472.40C210.02 474.65 212.10 476.23 214.20 477.20C216.30 478.17 219.87 478.03 221.00 478.20" stroke="#ff0000" stroke-width="1.1" fill="none" stroke-linejoin="round" stroke-linecap="round"/>
<path d="M221.00 478.20C221.95 477.40 225.10 475.65 226.70 473.40C228.30 471.15 229.32 467.12 230.60 464.70C231.88 462.28 233.77 459.87 234.40 458.90" stroke="#0000ff" stroke-width="1.1" fill="none" stroke-linejoin="round" stroke-linecap="round"/>
<path d="M234.40 458.90C235.22 459.70 237.68 460.80 239.30 463.70C240.92 466.60 242.33 471.63 244.10 476.30C245.87 480.97 247.82 488.02 249.90 491.70C251.98 495.38 254.20 496.00 256.60 498.40C259.00 500.80 262.27 504.30 264.30 506.10C266.33 507.90 267.08 507.57 268.80 509.20C270.52 510.83 272.35 513.88 274.60 515.90C276.85 517.92 279.90 520.28 282.30 521.30C284.70 522.32 286.43 521.30 289.00 522.00C291.57 522.70 294.48 523.78 297.70 525.50C300.92 527.22 305.88 529.72 308.30 532.30C310.72 534.88 310.75 536.98 312.20 541.00C313.65 545.02 315.67 552.67 317.00 556.40C318.33 560.13 318.45 559.10 320.20 563.40C321.95 567.70 325.32 576.28 327.50 582.20C329.68 588.12 331.57 595.72 333.30 598.90C335.03 602.08 337.13 600.90 337.90 601.30" stroke="#ff0000" stroke-width="1.1" fill="none" stroke-linejoin="round" stroke-linecap="round"/>
<path d="M337.90 601.30C338.70 599.57 341.07 594.68 342.70 590.90C344.33 587.12 346.02 581.50 347.70 578.60C349.38 575.70 350.98 574.82 352.80 573.50C354.62 572.18 356.92 572.02 358.60 570.70C360.28 569.38 361.45 567.18 362.90 565.60C364.35 564.02 365.73 562.42 367.30 561.20C368.87 559.98 371.47 558.78 372.30 558.30" stroke="#0000ff" stroke-width="1.1" fill="none" stroke-linejoin="round" stroke-linecap="round"/>
<path d="M372.30 558.30C373.03 558.27 375.00 557.78 376.70 558.10C378.40 558.42 381.53 559.85 382.50 560.20" stroke="#ff0000" stroke-width="1.1" fill="none" stroke-linejoin="round" stroke-linecap="round"/>
<path d="M-2.076 474.5H433" stroke="#0584ac" stroke-width="1" stroke-dasharray="2 1.676"/>
<path d="M-2.076 497.9H433" stroke="#0584ac" stroke-width="1" stroke-dasharray="2 1.676"/>
<path d="M-2.076 521.5H433" stroke="#0584ac" stroke-width="1" stroke-dasharray="2 1.676"/>
<path d="M-2.076 544.5H433" stroke="#0584ac" stroke-width="1" stroke-dasharray="2 1.676"/>
<path d="M-2.076 567.5H433" stroke="#0584ac" stroke-width="1" stroke-dasharray="2 1.676"/>
<path d="M-2.076 602.5H433" stroke="#0584ac" stroke-width="1" stroke-dasharray="2 1.676"/>
<path d="M195.9 438.7L234.4 458.9" stroke="#b8401a" stroke-width="1" fill="none"/>
<circle cx="235.30" cy="453.4" r="2.9" fill="none" stroke="#ff5208" stroke-width="2.1"/><path d="M235.30 449V453.6" stroke="#000" stroke-width="1.2"/>
<rect x="0" y="609" width="433" height="2" fill="#5e5e5e"/>
<rect x="23.9" y="611" width="1" height="1.6" fill="#b8b8b8"/>
<rect x="63.1" y="611" width="1" height="1.6" fill="#b8b8b8"/>
<rect x="102.4" y="611" width="1" height="1.6" fill="#b8b8b8"/>
<rect x="141.6" y="611" width="1" height="1.6" fill="#b8b8b8"/>
<rect x="180.9" y="611" width="1" height="1.6" fill="#b8b8b8"/>
<rect x="220.1" y="611" width="1" height="1.6" fill="#b8b8b8"/>
<rect x="259.4" y="611" width="1" height="1.6" fill="#b8b8b8"/>
<rect x="298.6" y="611" width="1" height="1.6" fill="#b8b8b8"/>
<rect x="337.9" y="611" width="1" height="1.6" fill="#b8b8b8"/>
<rect x="377.1" y="611" width="1" height="1.6" fill="#b8b8b8"/>
<g font-family="Liberation Sans" font-size="7" fill="#dcdcdc" letter-spacing="-0.05">
<text transform="translate(-15.25 618.2) scale(0.84 1)">18 Nov 14:00</text>
<text transform="translate(24.00 618.2) scale(0.84 1)">18 Nov 22:00</text>
<text transform="translate(63.25 618.2) scale(0.84 1)">19 Nov 06:00</text>
<text transform="translate(102.50 618.2) scale(0.84 1)">19 Nov 14:00</text>
<text transform="translate(141.75 618.2) scale(0.84 1)">19 Nov 22:00</text>
<text transform="translate(181.00 618.2) scale(0.84 1)">20 Nov 06:00</text>
<text transform="translate(220.25 618.2) scale(0.84 1)">20 Nov 14:00</text>
<text transform="translate(259.50 618.2) scale(0.84 1)">20 Nov 22:00</text>
<text transform="translate(298.75 618.2) scale(0.84 1)">21 Nov 06:00</text>
<text transform="translate(338.00 618.2) scale(0.84 1)">21 Nov 14:00</text>
<text transform="translate(377.25 618.2) scale(0.84 1)">21 Nov 22:00</text>
</g>
</svg>
</div>
</body></html>
